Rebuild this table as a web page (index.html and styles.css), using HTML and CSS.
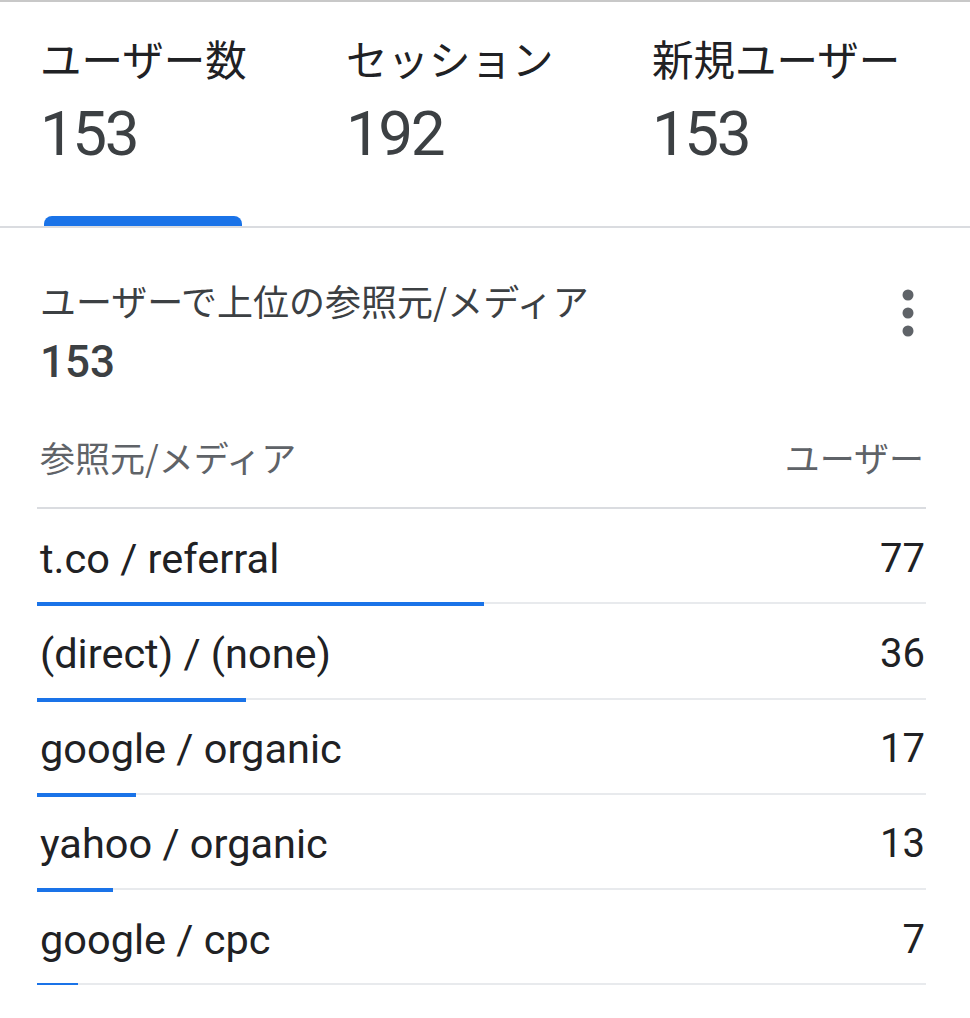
FILE: index.html
```html
<!DOCTYPE html>
<html lang="ja">
<head>
<meta charset="utf-8">
<link rel="stylesheet" href="styles.css">
</head>
<body>
<div class="topline"></div>
<div class="tabs">
  <div class="tab active">
    <div class="tab-label">ユーザー数</div>
    <div class="tab-value">153</div>
    <div class="indicator"></div>
  </div>
  <div class="tab">
    <div class="tab-label">セッション</div>
    <div class="tab-value">192</div>
  </div>
  <div class="tab">
    <div class="tab-label">新規ユーザー</div>
    <div class="tab-value">153</div>
  </div>
</div>
<div class="card">
  <div class="card-head">
    <div class="card-title">ユーザーで上位の参照元/メディア</div>
    <svg class="kebab" width="24" height="48" viewBox="0 0 24 48"><circle cx="12" cy="6" r="5.5" fill="#5f6368"/><circle cx="12" cy="24" r="5.5" fill="#5f6368"/><circle cx="12" cy="42" r="5.5" fill="#5f6368"/></svg>
  </div>
  <div class="card-total">153</div>
  <div class="table">
    <div class="thead">
      <span>参照元/メディア</span>
      <span>ユーザー</span>
    </div>
    <div class="row">
      <div class="row-main"><span class="name">t.co / referral</span><span class="num">77</span></div>
      <div class="track"><div class="fill" style="width:50.33%"></div></div>
    </div>
    <div class="row">
      <div class="row-main"><span class="name">(direct) / (none)</span><span class="num">36</span></div>
      <div class="track"><div class="fill" style="width:23.53%"></div></div>
    </div>
    <div class="row">
      <div class="row-main"><span class="name">google / organic</span><span class="num">17</span></div>
      <div class="track"><div class="fill" style="width:11.11%"></div></div>
    </div>
    <div class="row">
      <div class="row-main"><span class="name">yahoo / organic</span><span class="num">13</span></div>
      <div class="track"><div class="fill" style="width:8.5%"></div></div>
    </div>
    <div class="row">
      <div class="row-main"><span class="name">google / cpc</span><span class="num">7</span></div>
      <div class="track"><div class="fill" style="width:4.58%"></div></div>
    </div>
  </div>
</div>
</body>
</html>
```
FILE: styles.css
```css
html, body {
  margin: 0;
  padding: 0;
  background: #ffffff;
}
body {
  font-family: Roboto, "Noto Sans CJK JP", sans-serif;
  color: #202124;
}
.topline {
  height: 2px;
  background: #c8c8c8;
}
.tabs {
  display: flex;
  align-items: flex-start;
  padding-left: 40px;
  border-bottom: 2px solid #dadce0;
}
.tab {
  width: 306px;
  display: flex;
  flex-direction: column;
}
.tab-label {
  font-family: "Noto Sans CJK JP", sans-serif;
  font-size: 41.5px;
  line-height: 50px;
  margin-top: 31px;
  color: #202124;
}
.tab-value {
  font-size: 62px;
  line-height: 72px;
  margin-top: 15px;
  letter-spacing: -2.5px;
  color: #3c4043;
}
.indicator {
  margin-top: 46px;
  margin-left: 4px;
  width: 198px;
  height: 10px;
  background: #1a73e8;
  border-radius: 8px 8px 0 0;
}
.card {
  padding: 0 44px 0 37px;
}
.card-head {
  display: flex;
  align-items: flex-start;
  padding-left: 3px;
  margin-top: 50px;
}
.card-title {
  flex: 1;
  font-family: "Noto Sans CJK JP", sans-serif;
  font-size: 36px;
  line-height: 44px;
  color: #3c4043;
}
.kebab {
  margin-top: 11px;
  margin-right: 6px;
}
.card-total {
  padding-left: 3px;
  margin-top: 0;
  font-size: 44px;
  font-weight: 500;
  line-height: 50px;
  color: #3c4043;
}
.thead {
  display: flex;
  justify-content: space-between;
  padding: 0 2px 28px 3px;
  margin-top: 48px;
  font-family: "Noto Sans CJK JP", sans-serif;
  font-size: 35px;
  line-height: 44px;
  color: #5f6368;
  border-bottom: 2px solid #dadce0;
}
.row-main {
  display: flex;
  justify-content: space-between;
  align-items: center;
  height: 94.25px;
  padding: 4px 1px 0 3px;
  box-sizing: border-box;
  font-size: 41.5px;
  color: #202124;
}
.num {
  font-size: 40px;
}
.track {
  height: 2px;
  background: #e8eaed;
}
.fill {
  height: 4px;
  margin-top: -1px;
  background: #1a73e8;
}
```
